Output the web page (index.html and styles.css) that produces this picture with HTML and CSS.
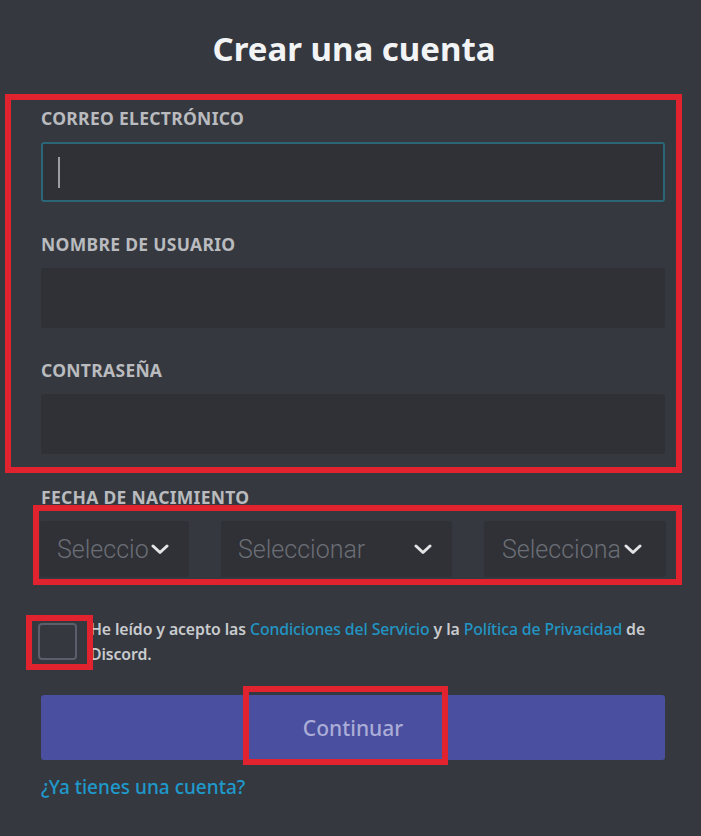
FILE: index.html
```html
<!DOCTYPE html>
<html lang="es">
<head>
<meta charset="utf-8">
<title>Crear una cuenta</title>
<link rel="stylesheet" href="styles.css">
</head>
<body>
<main class="page">
  <h1 class="title">Crear una cuenta</h1>

  <section class="mark mark-fields">
    <div class="field">
      <label class="label">CORREO ELECTRÓNICO</label>
      <div class="input input-focus"><span class="caret"></span></div>
    </div>
    <div class="field">
      <label class="label">NOMBRE DE USUARIO</label>
      <div class="input"></div>
    </div>
    <div class="field">
      <label class="label">CONTRASEÑA</label>
      <div class="input"></div>
    </div>
  </section>

  <label class="label label-date">FECHA DE NACIMIENTO</label>
  <div class="mark mark-dates">
    <div class="select select-first">
      <span class="select-text">Seleccionar</span>
      <svg class="chev" viewBox="0 0 18 11" width="18" height="11"><path d="M2 2 L9 8.5 L16 2" fill="none" stroke="#e3e4e6" stroke-width="3" stroke-linecap="round" stroke-linejoin="round"/></svg>
    </div>
    <div class="select">
      <span class="select-text">Seleccionar</span>
      <svg class="chev" viewBox="0 0 18 11" width="18" height="11"><path d="M2 2 L9 8.5 L16 2" fill="none" stroke="#e3e4e6" stroke-width="3" stroke-linecap="round" stroke-linejoin="round"/></svg>
    </div>
    <div class="select select-last">
      <span class="select-text">Seleccionar</span>
      <svg class="chev" viewBox="0 0 18 11" width="18" height="11"><path d="M2 2 L9 8.5 L16 2" fill="none" stroke="#e3e4e6" stroke-width="3" stroke-linecap="round" stroke-linejoin="round"/></svg>
    </div>
  </div>

  <div class="terms">
    <div class="mark mark-check"><span class="checkbox"></span></div>
    <p class="terms-text">He leído y acepto las <a class="link" href="#">Condiciones del Servicio</a> y la <a class="link" href="#">Política de Privacidad</a> de Discord.</p>
  </div>

  <div class="button">
    <span class="button-text">Continuar</span>
    <span class="mark-overlay"></span>
  </div>

  <a class="login" href="#">¿Ya tienes una cuenta?</a>
</main>
</body>
</html>
```

FILE: styles.css
```css
html, body {
  margin: 0;
  padding: 0;
  background: #35383e;
}

body {
  font-family: "Noto Sans", "Open Sans", sans-serif;
  color: #dcddde;
  height: 836px;
  overflow: hidden;
}

.page {
  padding: 29px 36px 0 41px;
  display: flex;
  flex-direction: column;
}

.title {
  margin: 0;
  font-size: 33px;
  line-height: 40px;
  font-weight: 700;
  color: #f2f3f5;
  text-align: center;
  padding-left: 2px;
}

.mark {
  border: 6px solid #e0232f;
  box-sizing: border-box;
}

.mark-fields {
  margin: 25px -17px 0 -36px;
  padding: 7px 11px 13px 30px;
  display: flex;
  flex-direction: column;
  gap: 31px;
}

.field {
  display: flex;
  flex-direction: column;
}

.label {
  display: block;
  font-size: 17.5px;
  line-height: 22px;
  font-weight: 700;
  color: #b9bbbf;
  margin-bottom: 13px;
  letter-spacing: 0.3px;
}

.input {
  height: 60px;
  box-sizing: border-box;
  background: #2f3136;
  border-radius: 3px;
  border: 2px solid #2f3136;
}

.input-focus {
  border-color: #2a6677;
  padding: 13px 0 0 15px;
}

.caret {
  display: block;
  width: 2px;
  height: 31px;
  background: #9a9ea4;
}

.label-date {
  margin: 13px 0 0;
}

.mark-dates {
  margin: -3px -17px 0 -8px;
  padding: 10px 10px 2px 1px;
  display: grid;
  grid-template-columns: 149px 231px 1fr;
  column-gap: 32px;
}

.select {
  height: 56px;
  background: #2f3136;
  border-radius: 3px;
  display: flex;
  align-items: center;
  padding: 0 20px 0 17px;
  overflow: hidden;
}

.select-first {
  padding: 0 20px 0 17px;
}

.select-last {
  padding: 0 23px 0 18px;
}

.select-text {
  flex: 1;
  min-width: 0;
  overflow: hidden;
  white-space: nowrap;
  font-family: Roboto, "Noto Sans", sans-serif;
  font-weight: 300;
  font-size: 25px;
  color: #6b6e75;
}

.select-first .select-text {
  flex: none;
  width: 92px;
}

.select-last .select-text {
  flex: none;
  width: 120px;
}

.chev {
  flex: none;
  margin-left: 2px;
}

.terms {
  margin-top: 30px;
  display: flex;
  align-items: flex-start;
}

.mark-check {
  position: relative;
  z-index: 1;
  margin-left: -15px;
  width: 67px;
  height: 55px;
  padding: 2px 0 0 6px;
  flex: none;
}

.checkbox {
  display: block;
  width: 39px;
  height: 37px;
  box-sizing: border-box;
  border: 2px solid #5b5f6b;
  border-radius: 4px;
}

.terms-text {
  margin: 2px 0 0 -3px;
  font-size: 15.8px;
  line-height: 25px;
  font-weight: 600;
  color: #c9cbce;
  letter-spacing: -0.1px;
}

.link {
  color: #2295c4;
  text-decoration: none;
  font-weight: 500;
}

.button {
  position: relative;
  margin-top: 25px;
  height: 65px;
  background: #4a4f9f;
  border-radius: 3px;
  display: flex;
  align-items: center;
  justify-content: center;
}

.button-text {
  font-size: 21px;
  font-weight: 500;
  color: #aaadd8;
}

.mark-overlay {
  position: absolute;
  left: 202px;
  top: -9px;
  width: 205px;
  height: 79px;
  box-sizing: border-box;
  border: 6px solid #e0232f;
}

.login {
  margin-top: 15px;
  font-size: 19px;
  line-height: 24px;
  font-weight: 500;
  color: #1f99cb;
  text-decoration: none;
  align-self: flex-start;
}
```
